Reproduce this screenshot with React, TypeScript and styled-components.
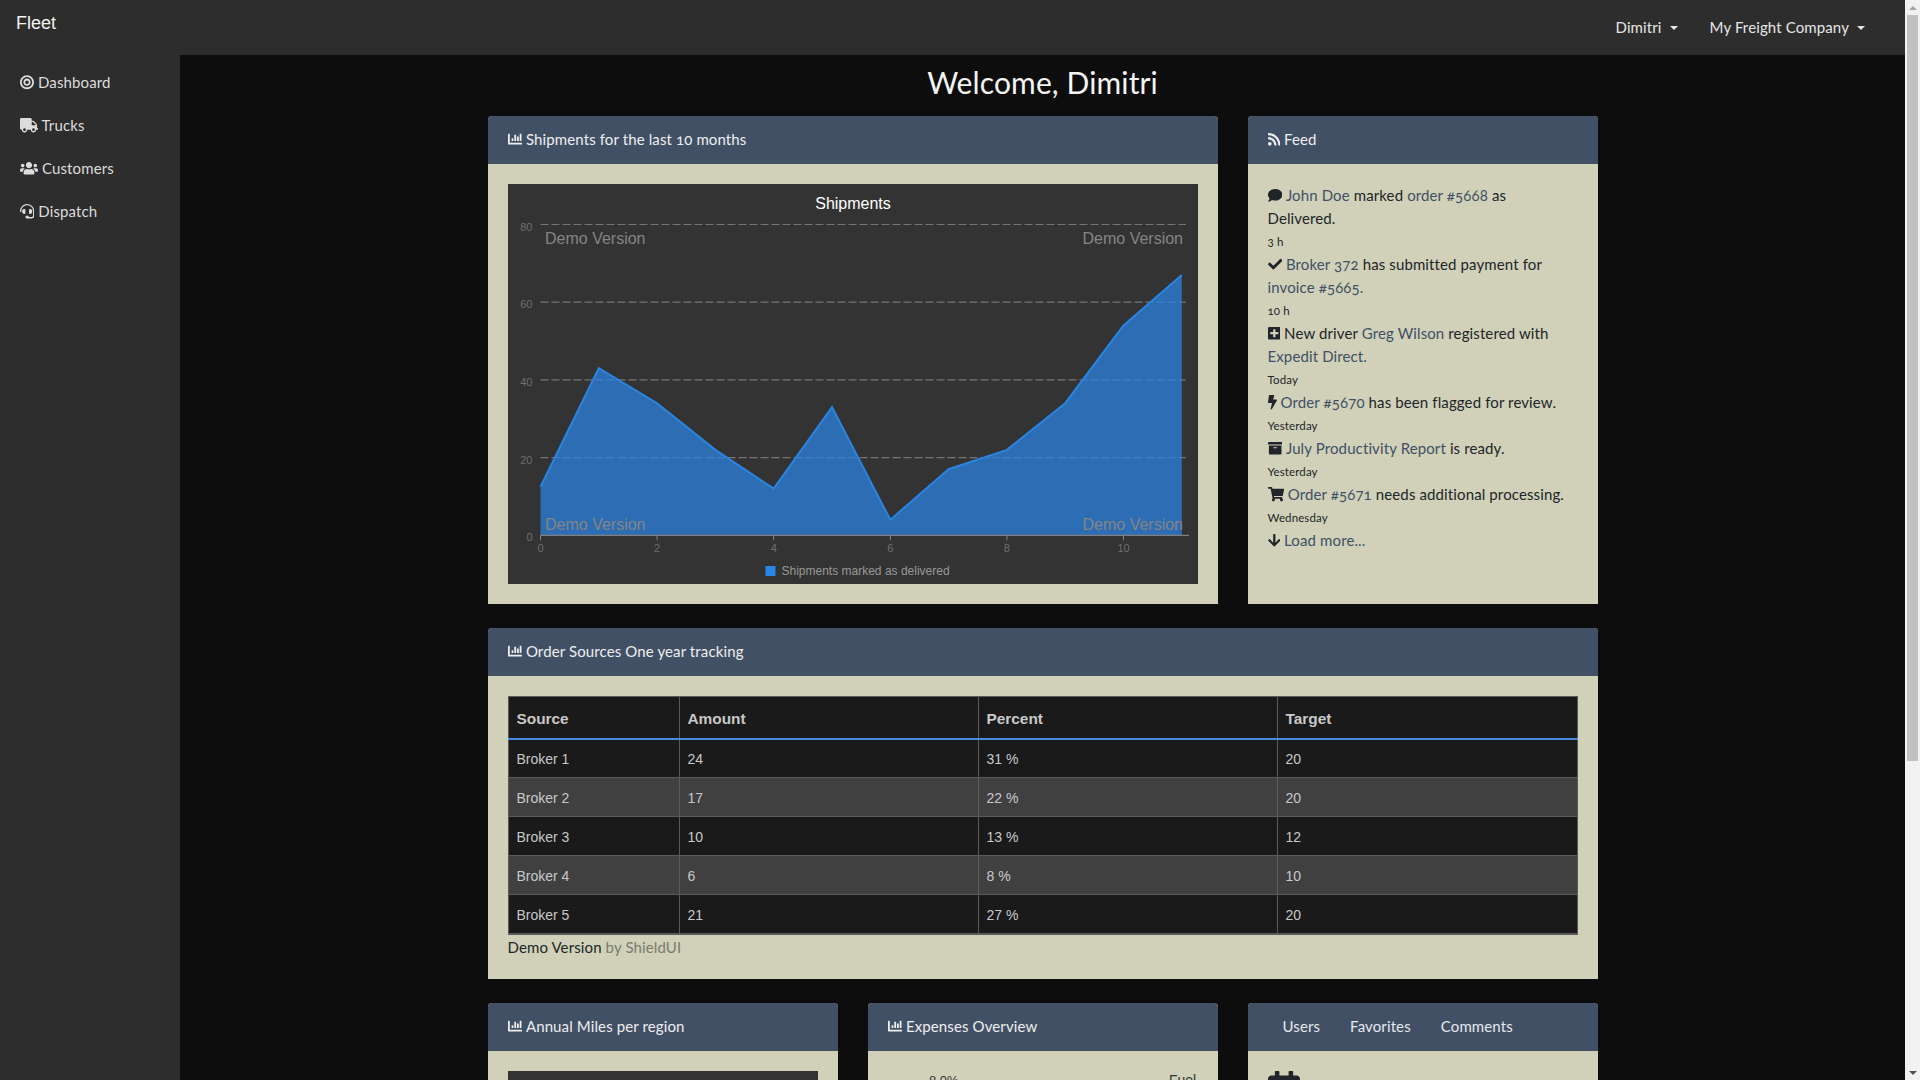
import { createGlobalStyle, styled } from 'styled-components';
import {
  FaArchive,
  FaArrowDown,
  FaBolt,
  FaBullseye,
  FaCalendar,
  FaChartBar,
  FaCheck,
  FaComment,
  FaHeadset,
  FaPlusSquare,
  FaRss,
  FaShoppingCart,
  FaTruck,
  FaUsers,
} from 'react-icons/fa';

const sans = `Lato, "Open Sans", "Liberation Sans", sans-serif`;
const arial = `"Liberation Sans", Arial, sans-serif`;

const GlobalStyle = createGlobalStyle`
  html, body {
    margin: 0;
    padding: 0;
    background: #0d0d0d;
    scrollbar-width: none;
  }
  body {
    font-family: ${sans};
    font-size: 15px;
    letter-spacing: 0.12px;
    line-height: 23px;
    color: #212529;
    font-variant-numeric: oldstyle-nums;
  }
  * {
    box-sizing: border-box;
  }
  svg {
    vertical-align: -0.125em;
  }
`;

const Page = styled.div`
  padding-right: 15px;
`;

/* the window's own scrollbar, as the reference shows it */
const ScrollTrack = styled.div`
  position: fixed;
  top: 0;
  right: 0;
  bottom: 0;
  width: 15px;
  display: flex;
  flex-direction: column;
  justify-content: space-between;
  background: #f1f1f1;
`;

const ScrollArrow = styled.div<{ $down?: boolean }>`
  flex: 0 0 15px;
  display: flex;
  align-items: center;
  justify-content: center;
  &::before {
    content: '';
    border-left: 4px solid transparent;
    border-right: 4px solid transparent;
    border-${(p) => (p.$down ? 'top' : 'bottom')}: 4px solid ${(p) => (p.$down ? '#505050' : '#a3a3a3')};
  }
`;

const ScrollThumb = styled.div`
  position: absolute;
  top: 15px;
  left: 2px;
  width: 11px;
  height: 746px;
  background: #c1c1c1;
`;

const Navbar = styled.header`
  display: flex;
  justify-content: space-between;
  align-items: center;
  height: 55px;
  padding: 0 24px 0 16px;
  background: #2d2d2d;
`;

const Brand = styled.a`
  font-family: ${arial};
  font-size: 18px;
  letter-spacing: 0;
  color: #f2f2f2;
  position: relative;
  top: -4px;
`;

const NavRight = styled.nav`
  display: flex;
  gap: 16px;
  padding-right: 8px;
`;

const NavDrop = styled.a`
  display: flex;
  align-items: center;
  padding: 0 8px;
  color: #e6e6e6;
  &::after {
    content: '';
    margin-left: 8px;
    border-top: 4.5px solid #e6e6e6;
    border-left: 4.5px solid transparent;
    border-right: 4.5px solid transparent;
  }
`;

const Shell = styled.div`
  display: flex;
  min-height: 1466px;
`;

const Sidebar = styled.aside`
  flex: 0 0 180px;
  background: #2d2d2d;
  padding-top: 6px;
`;

const SideLink = styled.a`
  display: block;
  height: 43px;
  padding: 10px 20px;
  color: #dcdcdc;
  white-space: nowrap;
`;

const Main = styled.main`
  flex: 1;
  min-width: 0;
`;

const Container = styled.div`
  width: 1110px;
  margin: 0 auto;
`;

const Title = styled.h1`
  margin: 0;
  height: 61px;
  font-size: 30px;
  font-weight: 400;
  line-height: 54px;
  text-align: center;
  color: #f4f4f4;
`;

const Row = styled.div<{ $columns: string }>`
  display: grid;
  grid-template-columns: ${(p) => p.$columns};
  gap: 30px;
  margin-bottom: 24px;
`;

const Panel = styled.section`
  background: #d0d1b8;
  border-radius: 4px 4px 0 0;
`;

const PanelHead = styled.div`
  display: flex;
  align-items: center;
  gap: 4px;
  height: 48px;
  padding: 0 20px 1px;
  background: #425066;
  border-radius: 4px 4px 0 0;
  color: #eeeeee;
`;

const Tabs = styled.div`
  display: flex;
`;

const Tab = styled.a`
  padding: 0 15px;
  color: #e4e8ee;
`;

const PanelBody = styled.div`
  padding: 20px;
`;

const ChartBox = styled.div`
  height: 400px;
  background: #333333;
`;

const Link = styled.a`
  color: #415066;
`;

const FeedItem = styled.div`
  svg {
    margin-right: 4px;
  }
`;

const When = styled.small`
  display: block;
  font-size: 11.5px;
  line-height: 23px;
`;

const OrderTable = styled.table`
  width: 1069px;
  table-layout: fixed;
  border-collapse: collapse;
  font-family: ${arial};
  font-size: 14px;
  letter-spacing: 0;
  font-variant-numeric: normal;
  color: #c8c8c8;
  background: #1a1a1a;
  border: 1px solid #5a5a5a;
  border-bottom-width: 2px;
`;

const HeadCell = styled.th`
  height: 42px;
  padding: 3px 8px 0;
  text-align: left;
  font-size: 15.4px;
  font-weight: 700;
  border-left: 1px solid #5a5a5a;
  border-bottom: 2px solid #4a8ae0;
`;

const BodyRow = styled.tr<{ $alt?: boolean }>`
  background: ${(p) => (p.$alt ? '#404040' : '#1a1a1a')};
`;

const BodyCell = styled.td`
  height: 39px;
  padding: 3px 8px 0;
  border: 1px solid #5a5a5a;
`;

const TableNote = styled.div`
  height: 24px;
  line-height: 25px;
`;

const Muted = styled.a`
  color: #7b7b70;
`;

const BigIcon = styled.div`
  color: #212529;
  height: 400px;
  svg {
    display: block;
    width: 32px;
    height: 36.5px;
  }
`;

const Icon = styled.span<{ $w?: number }>`
  svg {
    height: 14.4px;
    width: ${(p) => p.$w ?? 14.4}px;
  }
`;

const chartData = [12.5, 43, 34, 22, 12, 33, 4, 17, 22, 34, 54, 67];
const px = (i: number) => 32.5 + 58.3 * i;
const py = (v: number) => 351.3 - 3.885 * v;

const ShipmentsChart = () => {
  const line = chartData.map((v, i) => `${px(i)},${py(v)}`).join(' ');
  const area = `${px(0)},${py(0)} ${line} ${px(11)},${py(0)}`;
  return (
    <svg width="690" height="400" viewBox="0 0 690 400" fontFamily={arial} letterSpacing="0" style={{ display: 'block', fontVariantNumeric: 'normal' }}>
      <text x="345" y="25" textAnchor="middle" fontSize="16" fill="#ffffff">
        Shipments
      </text>
      {[20, 40, 60, 80].map((v) => (
        <g key={v}>
          <line x1="32.5" x2="678" y1={py(v)} y2={py(v)} stroke="#757575" strokeWidth="1.2" strokeDasharray="8 3" />
          <text x="24.5" y={py(v) + 6} textAnchor="end" fontSize="11" fill="#6f6f6f">
            {v}
          </text>
        </g>
      ))}
      <text x="24.5" y={py(0) + 6} textAnchor="end" fontSize="11" fill="#6f6f6f">
        0
      </text>
      <polygon points={area} fill="#2a84e6" fillOpacity="0.72" />
      <polyline points={line} fill="none" stroke="#2a84e0" strokeWidth="2" />
      <line x1="32.5" x2="681" y1={py(0)} y2={py(0)} stroke="#808080" strokeWidth="1.2" />
      {[0, 2, 4, 6, 8, 10].map((v) => (
        <g key={v}>
          <line x1={px(v)} x2={px(v)} y1={py(0)} y2={py(0) + 5} stroke="#808080" />
          <text x={px(v)} y="368" textAnchor="middle" fontSize="11" fill="#6f6f6f">
            {v}
          </text>
        </g>
      ))}
      <g fontSize="16" fill="#858585">
        <text x="37" y="60">
          Demo Version
        </text>
        <text x="675" y="60" textAnchor="end">
          Demo Version
        </text>
        <text x="37" y="346">
          Demo Version
        </text>
        <text x="675" y="346" textAnchor="end">
          Demo Version
        </text>
      </g>
      <rect x="257.5" y="382" width="10" height="10" fill="#2a87e8" />
      <text x="273.5" y="391" fontSize="12" fill="#999999">
        Shipments marked as delivered
      </text>
    </svg>
  );
};

const ExpensesChart = () => (
  <svg width="310" height="400" viewBox="0 0 310 400" fontFamily={arial} letterSpacing="0" style={{ display: 'block' }}>
    <text x="41" y="14" fontSize="13" fill="#333333">
      8.0%
    </text>
    <text x="281" y="14" fontSize="14" fill="#333333">
      Fuel
    </text>
    <circle cx="155" cy="190" r="110" fill="#2a70b8" />
  </svg>
);

const sideItems = [
  { icon: <FaBullseye />, width: 14, label: 'Dashboard' },
  { icon: <FaTruck />, width: 18, label: 'Trucks' },
  { icon: <FaUsers />, width: 18, label: 'Customers' },
  { icon: <FaHeadset />, width: 14.4, label: 'Dispatch' },
];

const orders = [
  ['Broker 1', '24', '31 %', '20'],
  ['Broker 2', '17', '22 %', '20'],
  ['Broker 3', '10', '13 %', '12'],
  ['Broker 4', '6', '8 %', '10'],
  ['Broker 5', '21', '27 %', '20'],
];

const App = () => {
  return (
    <Page>
      <GlobalStyle />
      <ScrollTrack>
        <ScrollArrow />
        <ScrollThumb />
        <ScrollArrow $down />
      </ScrollTrack>
      <Navbar>
        <Brand>Fleet</Brand>
        <NavRight>
          <NavDrop>Dimitri</NavDrop>
          <NavDrop>My Freight Company</NavDrop>
        </NavRight>
      </Navbar>
      <Shell>
        <Sidebar>
          {sideItems.map((item) => (
            <SideLink key={item.label}>
              <Icon $w={item.width}>{item.icon}</Icon> {item.label}
            </SideLink>
          ))}
        </Sidebar>
        <Main>
          <Container>
            <Title>Welcome, Dimitri</Title>

            <Row $columns="730px 350px">
              <Panel>
                <PanelHead>
                  <Icon><FaChartBar /></Icon> Shipments for the last 10 months
                </PanelHead>
                <PanelBody>
                  <ChartBox>
                    <ShipmentsChart />
                  </ChartBox>
                </PanelBody>
              </Panel>
              <Panel>
                <PanelHead>
                  <Icon $w={12.6}><FaRss /></Icon> Feed
                </PanelHead>
                <PanelBody>
                  <FeedItem>
                    <Icon><FaComment /></Icon>
                    <Link>John Doe</Link> marked <Link>order #5668</Link> as Delivered.
                    <When>3 h</When>
                  </FeedItem>
                  <FeedItem>
                    <Icon><FaCheck /></Icon>
                    <Link>Broker 372</Link> has submitted payment for <Link>invoice #5665.</Link>
                    <When>10 h</When>
                  </FeedItem>
                  <FeedItem>
                    <Icon $w={12.6}><FaPlusSquare /></Icon>
                    New driver <Link>Greg Wilson</Link> registered with <Link>Expedit Direct.</Link>
                    <When>Today</When>
                  </FeedItem>
                  <FeedItem>
                    <Icon $w={9}><FaBolt /></Icon>
                    <Link>Order #5670</Link> has been flagged for review.
                    <When>Yesterday</When>
                  </FeedItem>
                  <FeedItem>
                    <Icon><FaArchive /></Icon>
                    <Link>July Productivity Report</Link> is ready.
                    <When>Yesterday</When>
                  </FeedItem>
                  <FeedItem>
                    <Icon $w={16.2}><FaShoppingCart /></Icon>
                    <Link>Order #5671</Link> needs additional processing.
                    <When>Wednesday</When>
                  </FeedItem>
                  <FeedItem>
                    <Icon $w={12.6}><FaArrowDown /></Icon>
                    <Link>Load more...</Link>
                  </FeedItem>
                </PanelBody>
              </Panel>
            </Row>

            <Row $columns="1110px">
              <Panel>
                <PanelHead>
                  <Icon><FaChartBar /></Icon> Order Sources One year tracking
                </PanelHead>
                <PanelBody>
                  <OrderTable>
                    <colgroup>
                      <col width="171" />
                      <col width="299" />
                      <col width="299" />
                      <col width="300" />
                    </colgroup>
                    <thead>
                      <tr>
                        <HeadCell>Source</HeadCell>
                        <HeadCell>Amount</HeadCell>
                        <HeadCell>Percent</HeadCell>
                        <HeadCell>Target</HeadCell>
                      </tr>
                    </thead>
                    <tbody>
                      {orders.map((row, i) => (
                        <BodyRow key={row[0]} $alt={i % 2 === 1}>
                          {row.map((cell, j) => (
                            <BodyCell key={j}>{cell}</BodyCell>
                          ))}
                        </BodyRow>
                      ))}
                    </tbody>
                  </OrderTable>
                  <TableNote>
                    Demo Version <Muted>by ShieldUI</Muted>
                  </TableNote>
                </PanelBody>
              </Panel>
            </Row>

            <Row $columns="repeat(3, 350px)">
              <Panel>
                <PanelHead>
                  <Icon><FaChartBar /></Icon> Annual Miles per region
                </PanelHead>
                <PanelBody>
                  <ChartBox />
                </PanelBody>
              </Panel>
              <Panel>
                <PanelHead>
                  <Icon><FaChartBar /></Icon> Expenses Overview
                </PanelHead>
                <PanelBody>
                  <ExpensesChart />
                </PanelBody>
              </Panel>
              <Panel>
                <PanelHead>
                  <Tabs>
                    <Tab>Users</Tab>
                    <Tab>Favorites</Tab>
                    <Tab>Comments</Tab>
                  </Tabs>
                </PanelHead>
                <PanelBody>
                  <BigIcon>
                    <FaCalendar />
                  </BigIcon>
                </PanelBody>
              </Panel>
            </Row>
          </Container>
        </Main>
      </Shell>
    </Page>
  );
};

export default App;
